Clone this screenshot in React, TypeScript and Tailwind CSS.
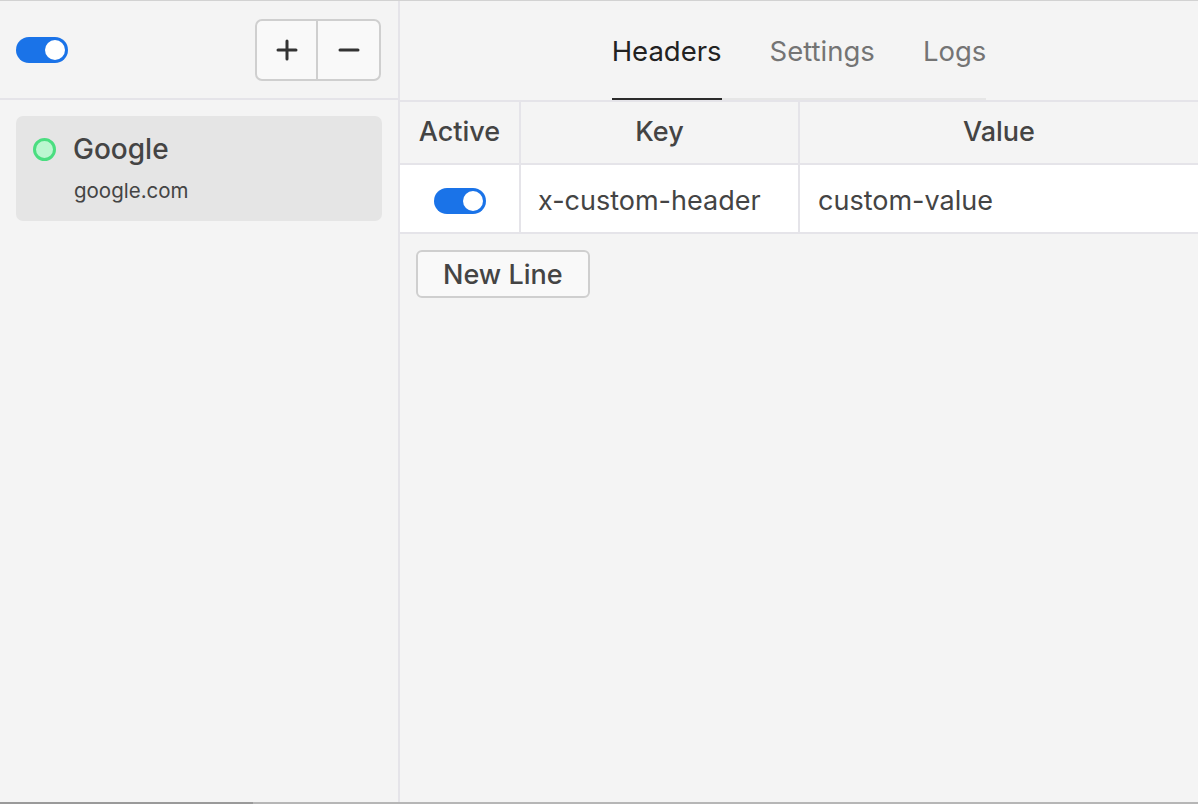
import React, { useState } from 'react';

const Toggle: React.FC<{ on: boolean; onChange: () => void }> = ({ on, onChange }) => (
  <button
    onClick={onChange}
    className={`relative h-[26px] w-[52px] shrink-0 rounded-full transition-colors ${on ? 'bg-[#1a73e8]' : 'bg-[#cfcfcf]'}`}
  >
    <span
      className={`absolute top-[3px] h-[20px] w-[20px] rounded-full bg-white transition-all ${on ? 'left-[29px]' : 'left-[3px]'}`}
    />
  </button>
);

const tabs = ['Headers', 'Settings', 'Logs'];

export default function App() {
  const [enabled, setEnabled] = useState(true);
  const [rowOn, setRowOn] = useState(true);
  const [tab, setTab] = useState('Headers');

  return (
    <div className="flex h-[804px] w-[1198px] flex-col overflow-hidden border-t border-[#d2d2d2] bg-[#f4f4f4] font-['Inter',sans-serif] text-[#444]">
      <div className="flex min-h-0 flex-1">
        {/* sidebar */}
        <aside className="flex w-[400px] shrink-0 flex-col border-r-2 border-[#e5e4e9]">
          <div className="flex h-[99px] shrink-0 items-center justify-between border-b-2 border-[#e5e4e9] pl-4 pr-[17px]">
            <Toggle on={enabled} onChange={() => setEnabled(!enabled)} />
            <div className="flex h-[62px] overflow-hidden rounded-[7px] border-2 border-[#cfcfcf] bg-[#f9f9f9]">
              <button className="flex w-[61px] items-center justify-center border-r-2 border-[#cfcfcf] text-[#333]">
                <svg width="22" height="22" viewBox="0 0 22 22"><path d="M11 2v18M2 11h18" stroke="currentColor" strokeWidth="3" strokeLinecap="round" /></svg>
              </button>
              <button className="flex w-[61px] items-center justify-center text-[#333]">
                <svg width="22" height="22" viewBox="0 0 22 22"><path d="M2 11h18" stroke="currentColor" strokeWidth="3" strokeLinecap="round" /></svg>
              </button>
            </div>
          </div>
          <div className="p-4">
            <div className="flex h-[105px] flex-col rounded-[7px] bg-[#e5e5e5] pl-[17px] pt-[17px]">
              <div className="flex items-center gap-[17px]">
                <span className="h-[23px] w-[23px] rounded-full border-[3px] border-[#4ade80] bg-[#bbf7d0]" />
                <span className="text-[28px] font-medium leading-[32px] text-[#444]">Google</span>
              </div>
              <div className="mt-[14px] pl-[41px] text-[20.5px] leading-[24px] text-[#444]">google.com</div>
            </div>
          </div>
        </aside>

        {/* main */}
        <main className="flex min-w-0 flex-1 flex-col">
          <div className="flex h-[99px] shrink-0 items-end justify-center">
            <div className="flex gap-[48px] border-b-2 border-[#e6e6e6]">
              {tabs.map((t) => (
                <button
                  key={t}
                  onClick={() => setTab(t)}
                  className={`-mb-[2px] border-b-2 pb-[31px] text-[27.5px] leading-[32px] ${tab === t ? 'border-[#2b2b2b] text-[#222]' : 'border-transparent text-[#747474]'}`}
                >
                  {t}
                </button>
              ))}
            </div>
          </div>
          <table className="w-full border-collapse">
            <thead>
              <tr className="h-[63px] border-y-2 border-[#e5e4e9]">
                <th className="w-[120px] border-r-2 border-[#e5e4e9] text-[27px] font-medium text-[#444]">Active</th>
                <th className="w-[279px] border-r-2 border-[#e5e4e9] text-[27px] font-medium text-[#444]">Key</th>
                <th className="text-[27px] font-medium text-[#444]">Value</th>
              </tr>
            </thead>
            <tbody>
              <tr className="h-[69px] border-b-2 border-[#e5e4e9] bg-white">
                <td className="border-r-2 border-[#e5e4e9] pt-[4px] text-center">
                  <div className="flex justify-center">
                    <Toggle on={rowOn} onChange={() => setRowOn(!rowOn)} />
                  </div>
                </td>
                <td className="border-r-2 border-[#e5e4e9] pl-[17px] pt-[6px] text-[27px] text-[#444]">x-custom-header</td>
                <td className="pl-[18px] pt-[6px] text-[27px] text-[#444]">custom-value</td>
              </tr>
            </tbody>
          </table>
          <div className="pl-4 pt-[16px]">
            <button className="h-[48px] rounded-[6px] border-2 border-[#cfcfcf] bg-[#f9f9f9] px-[25px] pt-[2px] text-[27px] font-medium text-[#444]">
              New Line
            </button>
          </div>
        </main>
      </div>
      <div className="flex h-[2px] shrink-0">
        <div className="w-[253px] bg-[#9a9a9a]" />
        <div className="flex-1 bg-[#b6b6b6]" />
      </div>
    </div>
  );
}
